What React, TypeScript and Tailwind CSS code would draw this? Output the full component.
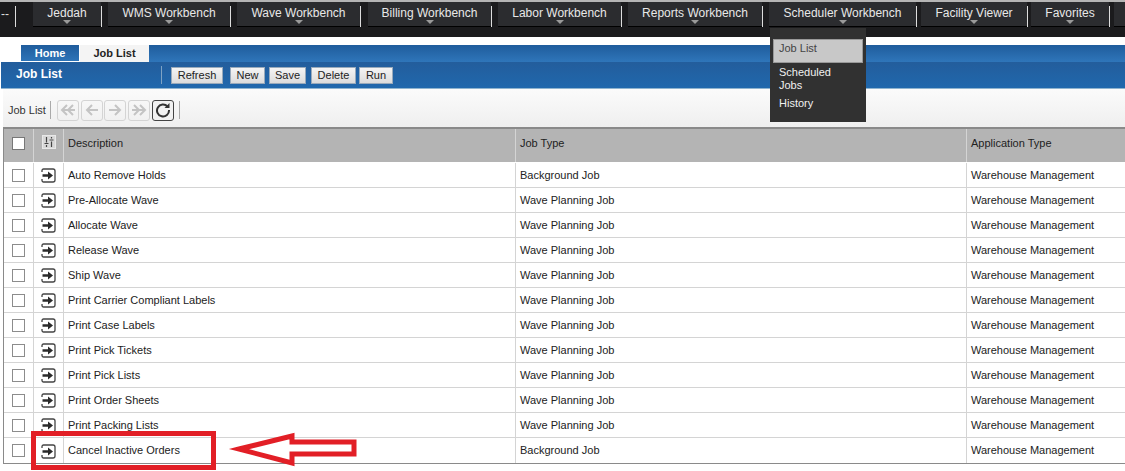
const navItems = [
  { name: "Jeddah", width: "w-[68px]", ml: "ml-[17px]" },
  { name: "WMS Workbench", width: "w-[122px]", ml: "ml-[6px]" },
  { name: "Wave Workbench", width: "w-[123px]", ml: "ml-[6px]" },
  { name: "Billing Workbench", width: "w-[123px]", ml: "ml-[7px]" },
  { name: "Labor Workbench", width: "w-[123px]", ml: "ml-[6px]" },
  { name: "Reports Workbench", width: "w-[134px]", ml: "ml-[6px]" },
  { name: "Scheduler Workbench", width: "w-[147px]", ml: "ml-[6px]" },
  { name: "Facility Viewer", width: "w-[106px]", ml: "ml-[4px]" },
  { name: "Favorites", width: "w-[78px]", ml: "ml-[3px]" },
];

const actions = [
  { label: "Refresh", cls: "w-[52px] mr-[7px]" },
  { label: "New", cls: "w-[35px] mr-[4px]" },
  { label: "Save", cls: "w-[37px] mr-[5px]" },
  { label: "Delete", cls: "w-[45px] mr-[3px]" },
  { label: "Run", cls: "w-[34px]" },
];

const jobs = [
  ["Auto Remove Holds", "Background Job"],
  ["Pre-Allocate Wave", "Wave Planning Job"],
  ["Allocate Wave", "Wave Planning Job"],
  ["Release Wave", "Wave Planning Job"],
  ["Ship Wave", "Wave Planning Job"],
  ["Print Carrier Compliant Labels", "Wave Planning Job"],
  ["Print Case Labels", "Wave Planning Job"],
  ["Print Pick Tickets", "Wave Planning Job"],
  ["Print Pick Lists", "Wave Planning Job"],
  ["Print Order Sheets", "Wave Planning Job"],
  ["Print Packing Lists", "Wave Planning Job"],
  ["Cancel Inactive Orders", "Background Job"],
];

const RowIcon = () => (
  <svg width="15" height="15" viewBox="0 0 15 15" fill="none">
    <path d="M1 4V2.5A1.5 1.5 0 0 1 2.500 1H12a2 2 0 0 1 2 2v9a2 2 0 0 1-2 2H2.500A1.500 1.500 0 0 1 1 12.500V11" stroke="#444" strokeWidth="1.300" />
    <path d="M1.500 6.300h5.500V3.500L12 7.500l-5 4V8.700H1.500z" fill="#2a2a2a" />
  </svg>
);

const PagerIcon = ({ d, mr }: { d: string; mr: string }) => (
  <div className={`w-[22px] h-[21px] ${mr} rounded-[3px] border border-[#d4d4d4] flex items-center justify-center`}>
    <svg width="18" height="14" viewBox="0 0 18 14" fill="none" stroke="#c4c4c4" strokeWidth="2">
      <path d={d} />
    </svg>
  </div>
);

export default function App() {
  return (
    <div className="w-[1125px] h-[471px] relative overflow-hidden bg-white text-[11px] text-[#222]" style={{ fontFamily: '"Liberation Sans", Arial, sans-serif' }}>
      {/* top nav */}
      <div className="h-[37px] bg-[#1b1b1d] border-t-2 border-[#b5b5b5] flex items-start">
        <span className="ml-[1px] mt-[5px] shrink-0 whitespace-nowrap text-[12px] text-[#ddd] leading-[14px]">--</span>
        <div className="ml-[6px] mt-[4px] shrink-0 w-px h-[21px] bg-[#ddd]" />
        {navItems.map((item) => (
          <div key={item.name} className="flex items-start shrink-0">
            <div className={`${item.ml} ${item.width} h-[25px] bg-[#2b2c2f] border-b border-black flex flex-col items-center pt-[4px]`}>
              <span className="text-[12px] leading-[14px] text-[#e8e8e8] whitespace-nowrap">{item.name}</span>
              <span className="w-0 h-0 border-x-[4px] border-x-transparent border-t-[4px] border-t-[#9a9a9a]" />
            </div>
            <div className="mt-[4px] w-px h-[21px] bg-[#ddd]" />
          </div>
        ))}
        <div className="ml-[4px] w-[20px] h-[25px] shrink-0 bg-[#2b2c2f] border-b border-black" />
      </div>

      {/* tabs */}
      <div className="mt-[8px] h-[17px] flex items-stretch bg-[linear-gradient(#1f5c9c,#2f76ba)] ml-[21px]">
        <div className="w-[59px] border-r border-b border-white flex items-center justify-center text-white font-bold text-[11px]">Home</div>
        <div className="w-[69px] bg-[#f4f4f4] flex items-center justify-center font-bold text-[11px] text-[#222]">Job List</div>
      </div>

      {/* title bar */}
      <div className="h-[27px] ml-[1px] bg-[linear-gradient(#235d9c,#2068ad)] border-b border-[#8fb4cf] flex items-center">
        <span className="ml-[15px] w-[145px] pb-[2px] text-white font-bold text-[12px]">Job List</span>
        <div className="w-px h-[18px] bg-[#7fa3c4]" />
        <div className="ml-[9px] flex text-[#222]">
          {actions.map((b) => (
            <button
              key={b.label}
              className={`h-[17px] leading-[15px] bg-[linear-gradient(#f4f4f4,#dcdcdc)] border border-[#9ab] text-center ${b.cls}`}
            >
              {b.label}
            </button>
          ))}
        </div>
      </div>

      {/* toolbar */}
      <div className="h-[38px] ml-[3px] pt-[4px] bg-[linear-gradient(#fbfbfb,#efefef)] flex items-center">
        <span className="ml-[5px] text-[#333]">Job List</span>
        <div className="ml-[4px] mr-[6px] w-px h-[18px] bg-[#aaa]" />
        <PagerIcon d="M8 2 3 7l5 5M14 2 9 7l5 5M3 7h13" mr="mr-[2px]" />
        <PagerIcon d="M9 2 4 7l5 5M4 7h11" mr="mr-[1px]" />
        <PagerIcon d="M9 2l5 5-5 5M14 7H3" mr="mr-[2px]" />
        <PagerIcon d="M10 2l5 5-5 5M4 2l5 5-5 5M15 7H2" mr="mr-[2px]" />
        <div className="w-[22px] h-[21px] rounded-[3px] border border-[#444] bg-[#f2f2f2] flex items-center justify-center">
          <svg width="16" height="16" viewBox="0 0 16 16" fill="none" stroke="#333" strokeWidth="2">
            <path d="M12.500 4.500A6 6 0 1 0 14 8" />
            <path d="M14.500 1v5h-5z" fill="#333" stroke="none" />
          </svg>
        </div>
        <div className="ml-[5px] w-px h-[18px] bg-[#aaa]" />
      </div>

      {/* job table */}
      <div className="ml-[3px] w-[1122px] border-l border-b border-t-2 border-[#8a8a8a]">
        <div className="h-[34px] flex bg-[#b4b4b4] border-b border-white text-[#222]">
          <div className="w-[30px] pb-[5px] border-r border-[#d4d4d4] flex items-center justify-center">
            <span className="w-[13px] h-[13px] bg-white border border-[#777]" />
          </div>
          <div className="w-[30px] border-r border-[#d4d4d4] flex justify-center pt-[6px]">
            <span className="w-[14px] h-[14px] bg-[#d8d8d8] border border-[#e8e8e8] flex items-center justify-center">
              <svg width="10" height="10" viewBox="0 0 10 10" fill="none" stroke="#444" strokeWidth="1.200">
                <path d="M2.500 0v5.500M2.500 8v2M7.500 0v1.500M7.500 4.500V10M0.500 6.500h4M5.500 3h4" />
              </svg>
            </span>
          </div>
          <div className="w-[452px] pb-[5px] border-r border-[#d4d4d4] pl-[4px] flex items-center">Description</div>
          <div className="w-[451px] pb-[5px] border-r border-[#d4d4d4] pl-[4px] flex items-center">Job Type</div>
          <div className="flex-1 pb-[5px] pl-[4px] flex items-center">Application Type</div>
        </div>
        {jobs.map(([name, type]) => (
          <div key={name} className="h-[25px] flex border-b border-[#d4d4d4] last:border-b-0">
            <div className="w-[30px] border-r border-[#d4d4d4] flex items-center justify-center">
              <span className="w-[13px] h-[13px] border border-[#8c8c8c]" />
            </div>
            <div className="w-[30px] border-r border-[#d4d4d4] flex items-center justify-center pt-[1px]">
              <RowIcon />
            </div>
            <div className="w-[452px] border-r border-[#d4d4d4] pl-[4px] flex items-center">{name}</div>
            <div className="w-[451px] border-r border-[#d4d4d4] pl-[4px] flex items-center">{type}</div>
            <div className="flex-1 pl-[4px] flex items-center">Warehouse Management</div>
          </div>
        ))}
      </div>

      {/* scheduler dropdown */}
      <div className="absolute left-[770px] top-[28px] w-[96px] h-[94px] bg-[#313131] pt-[11px] px-[3px] text-[#f0f0f0]">
        <div className="h-[24px] bg-[#c8c8c8] border border-[#999] text-[#444] pl-[5px] leading-[16px]">Job List</div>
        <div className="pl-[6px] pt-[3px] leading-[13px]">Scheduled<br />Jobs</div>
        <div className="pl-[6px] pt-[5px] leading-[13px]">History</div>
      </div>

      {/* red annotation */}
      <div className="absolute left-[31px] top-[431px] w-[185px] h-[39px] border-[5px] border-[#e21f26]" />
      <svg className="absolute left-[225px] top-[430px]" width="135" height="40" viewBox="0 0 135 40" fill="none">
        <path d="M14 19 67 6v6h62v12H67v9z" stroke="#e21f26" strokeWidth="5" strokeMiterlimit="10" />
      </svg>
    </div>
  );
}
